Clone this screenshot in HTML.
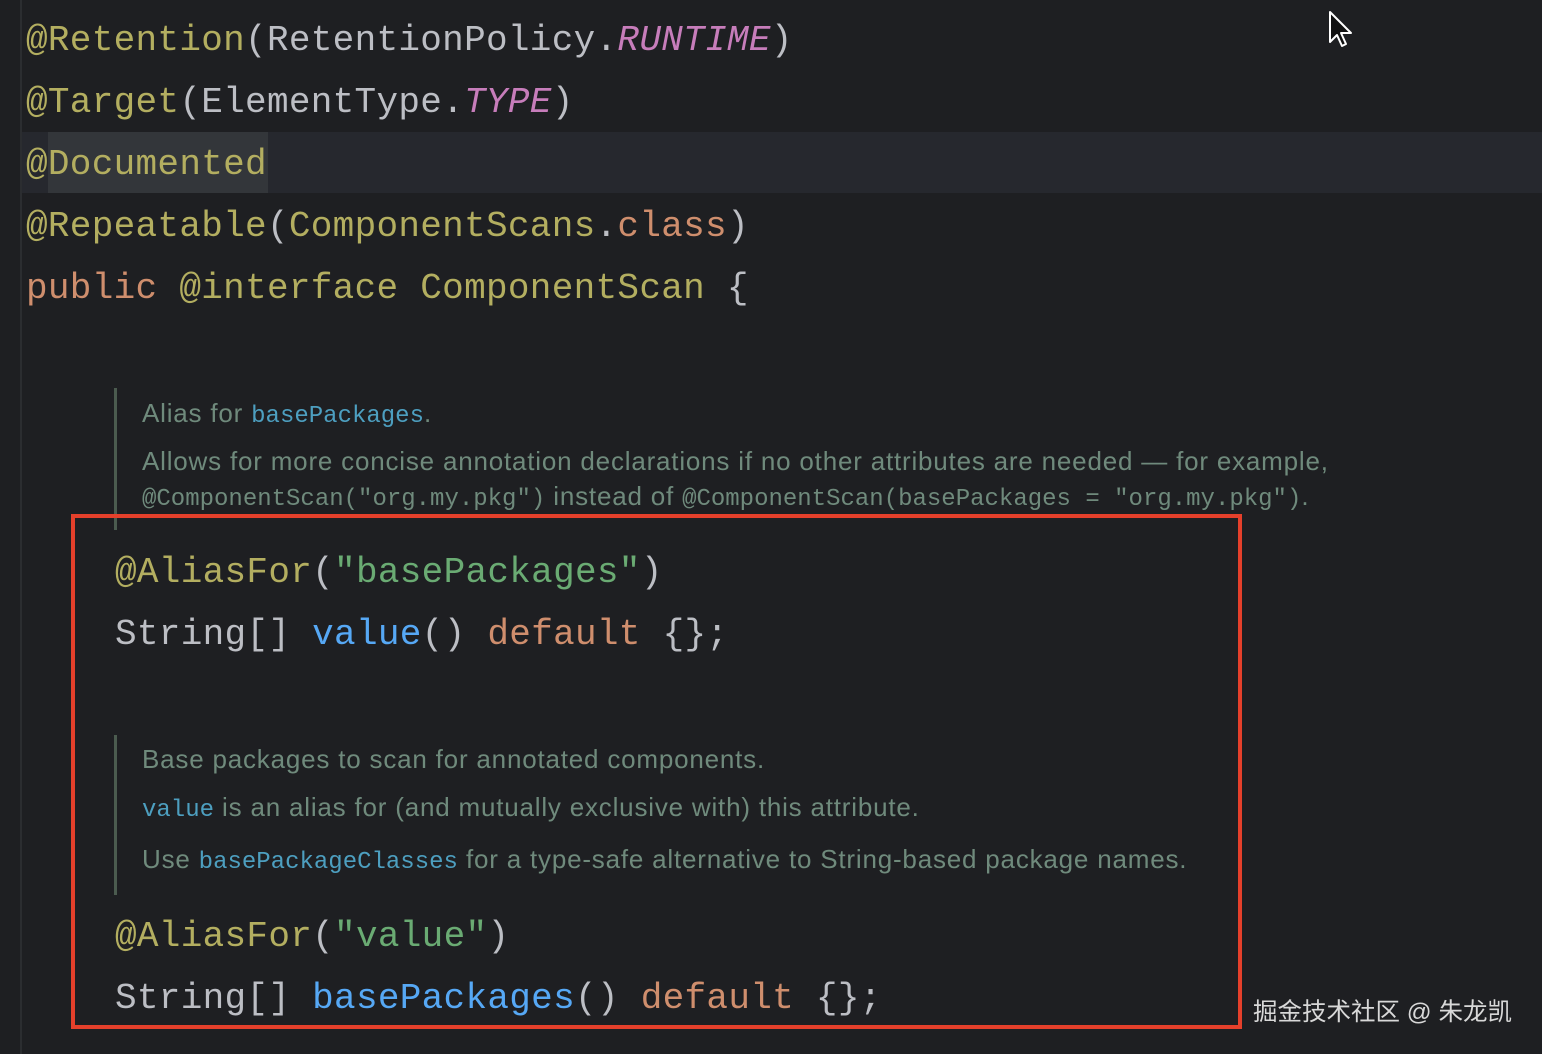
<!DOCTYPE html>
<html><head><meta charset="utf-8"><style>
body{margin:0;width:1542px;height:1054px;background:#1e1f22;overflow:hidden;position:relative}
.c{position:absolute;left:26px;font-family:"Liberation Mono",monospace;font-size:36px;letter-spacing:0.3px;color:#bcbec4;white-space:pre;line-height:40px}
.an{color:#b3ae60}.it{color:#c77dbb;font-style:italic}.kw{color:#cf8e6d}.st{color:#6aab73}.fn{color:#56a8f5}
.d{position:absolute;left:142px;font-family:"Liberation Sans",sans-serif;font-size:26px;letter-spacing:0.8px;color:#6f8a7c;white-space:pre;line-height:30px}
.m{font-family:"Liberation Mono",monospace;font-size:24px;letter-spacing:0}
.l{color:#4d9fc0}
.bar{position:absolute;left:114px;width:3px;background:#4b5b4f}
</style></head><body>
<div style="position:absolute;left:20px;top:0;width:2px;height:1054px;background:#2b2d30"></div>
<div style="position:absolute;left:22px;top:132px;width:1520px;height:61px;background:#26282e"></div>
<div style="position:absolute;left:48px;top:132px;width:220px;height:61px;background:#33363a"></div>
<div class="c" style="top:21px"><span class="an">@Retention</span>(RetentionPolicy.<span class="it">RUNTIME</span>)</div>
<div class="c" style="top:83px"><span class="an">@Target</span>(ElementType.<span class="it">TYPE</span>)</div>
<div class="c" style="top:145px"><span class="an">@Documented</span></div>
<div class="c" style="top:207px"><span class="an">@Repeatable</span>(<span class="an">ComponentScans</span>.<span class="kw">class</span>)</div>
<div class="c" style="top:269px"><span class="kw">public</span> <span class="an">@interface</span> <span class="an">ComponentScan</span> {</div>
<div class="bar" style="top:388px;height:142px"></div>
<div class="d" style="top:398px">Alias for <span class="m l">basePackages</span>.</div>
<div class="d" style="top:446px">Allows for more concise annotation declarations if no other attributes are needed — for example,</div>
<div class="d" style="top:481px"><span class="m">@ComponentScan("org.my.pkg")</span> instead of <span class="m">@ComponentScan(basePackages = "org.my.pkg")</span>.</div>
<div class="c" style="left:115px;top:553px"><span class="an">@AliasFor</span>(<span class="st">"basePackages"</span>)</div>
<div class="c" style="left:115px;top:615px">String[] <span class="fn">value</span>() <span class="kw">default</span> {};</div>
<div class="bar" style="top:735px;height:160px"></div>
<div class="d" style="top:744px">Base packages to scan for annotated components.</div>
<div class="d" style="top:792px"><span class="m l">value</span> is an alias for (and mutually exclusive with) this attribute.</div>
<div class="d" style="top:844px">Use <span class="m l">basePackageClasses</span> for a type-safe alternative to String-based package names.</div>
<div class="c" style="left:115px;top:917px"><span class="an">@AliasFor</span>(<span class="st">"value"</span>)</div>
<div class="c" style="left:115px;top:979px">String[] <span class="fn">basePackages</span>() <span class="kw">default</span> {};</div>
<div style="position:absolute;left:71px;top:514px;width:1163px;height:507px;border:4px solid #e5402b"></div>
<div style="position:absolute;left:1253px;top:993px;font-family:'Liberation Sans','Noto Sans CJK SC',sans-serif;font-size:24.5px;color:#d8d8d8;white-space:pre">掘金技术社区 @ 朱龙凯</div>
<svg style="position:absolute;left:1328px;top:10px" width="26" height="40" viewBox="0 0 26 40"><path d="M2 2 L2 32 L9 25 L14 36 L18 34 L13 23 L23 23 Z" fill="#111" stroke="#fff" stroke-width="2" stroke-linejoin="round"/></svg>
</body></html>
